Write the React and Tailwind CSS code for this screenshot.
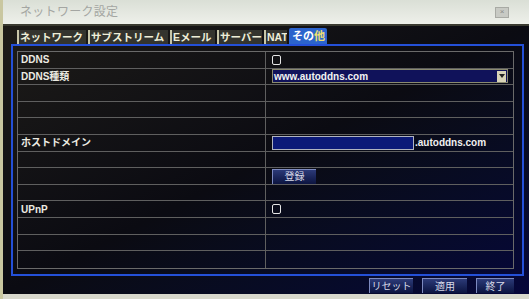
const font = { fontFamily: '"Liberation Sans", "Noto Sans CJK JP", sans-serif' }

const tabs = [
  { label: 'ネットワーク', w: 'w-[69px]' },
  { label: 'サブストリーム', w: 'w-[80px]' },
  { label: 'Eメール', w: 'w-[45px]' },
  { label: 'サーバー', w: 'w-[45px]' },
  { label: 'NAT', w: 'w-[23px] text-[9px]' },
]

function Checkbox() {
  return <div className="w-[9px] h-[10px] border-[1.5px] border-[#e6e6e6] rounded-[2px]" />
}

function Row({ label, children }) {
  return (
    <div className="flex h-[16.75px] border-b border-[#5f5f5f] last:border-b-0">
      <div className="w-[248px] border-r border-[#5f5f5f] pl-[3px] flex items-center text-[10px] font-bold text-[#ecebe2]">
        {label}
      </div>
      <div className="flex-1 flex items-center pl-[6px]">{children}</div>
    </div>
  )
}

function Btn({ children, className }) {
  return (
    <div className={`h-[15px] flex items-center justify-center text-[10px] text-[#d8dae8] bg-gradient-to-b from-[#2c3a78] to-[#0c1440] border-t border-[#7d8ac0] border-l border-[#5d6aa0] ${className}`}>
      {children}
    </div>
  )
}

export default function App() {
  return (
    <div style={font} className="w-[529px] h-[299px] overflow-hidden flex flex-col bg-[#0a0a0e] border-l-[3px] border-[#c9c7a0]">
      <div className="h-[26px] shrink-0 flex items-center justify-between pl-[17px] pr-[20px] bg-gradient-to-b from-[#dadfd6] to-[#eef0ea] border-b-2 border-[#3a3a30]">
        <span className="text-[12px] text-[#a4a6a2] tracking-wide">ネットワーク設定</span>
        <div className="w-[14px] h-[11px] bg-[#c8cac4] border border-[#a8aaa4] flex items-center justify-center text-[8px] text-[#8a8a86] leading-none">×</div>
      </div>

      <div className="flex-1 flex flex-col bg-gradient-to-br from-[#1e1c18] via-[#0b0b12] to-[#06063a] pl-[8px] pr-[5px]">
        <div className="flex items-end h-[18px] pl-[6px] gap-[2px] pt-[3px]">
          {tabs.map((t) => (
            <div key={t.label} className={`${t.w} h-[14px] pl-[1px] flex items-center text-[10.5px] font-bold text-[#eeeed8] bg-[#34342e] border-l-2 border-[#c8c6a8] leading-none whitespace-nowrap overflow-hidden`}>
              {t.label}
            </div>
          ))}
          <div className="w-[38px] h-[16px] pl-[3px] flex items-center text-[11px] font-bold text-[#ffffff] bg-[#2c64cc] rounded-t-[2px] leading-none whitespace-nowrap">
            <span>その</span>
            <span className="text-[#f0e070]">他</span>
          </div>
        </div>

        <div className="h-[232px] border-2 border-[#2450d8] pt-[5px] pl-[4px] pr-[8px] pb-[5px]">
          <div className="border border-[#6a6a6a] h-full flex flex-col">
            <Row label="DDNS"><Checkbox /></Row>
            <Row label="DDNS種類">
              <div className="w-[236px] h-[14px] bg-[#10125a] border border-[#8a8a70] flex items-center justify-between pl-[1px]">
                <span className="text-[10px] font-bold text-[#f2f2f2]">www.autoddns.com</span>
                <div className="w-[9px] h-[11px] bg-[#d8d4b8] mr-[1px] flex items-center justify-center">
                  <div className="w-0 h-0 border-l-[3px] border-r-[3px] border-t-[4px] border-l-transparent border-r-transparent border-t-[#222]" />
                </div>
              </div>
            </Row>
            <Row />
            <Row />
            <Row />
            <Row label="ホストドメイン">
              <div className="w-[142px] h-[14px] bg-[#0c1a78] border border-[#b0b4c0]" />
              <span className="text-[10px] font-bold text-[#f0f0f0] ml-[1px]">.autoddns.com</span>
            </Row>
            <Row />
            <Row>
              <Btn className="w-[44px] h-[13px]">登録</Btn>
            </Row>
            <Row />
            <Row label="UPnP"><Checkbox /></Row>
            <Row />
            <Row />
            <Row />
          </div>
        </div>

        <div className="flex justify-end gap-[9px] pr-[10px] pt-[2px]">
          <Btn className="w-[44px]">リセット</Btn>
          <Btn className="w-[45px]">適用</Btn>
          <Btn className="w-[38px]">終了</Btn>
        </div>
      </div>
      <div className="h-[5px] shrink-0 bg-[#d8d8cc]" />
    </div>
  )
}
